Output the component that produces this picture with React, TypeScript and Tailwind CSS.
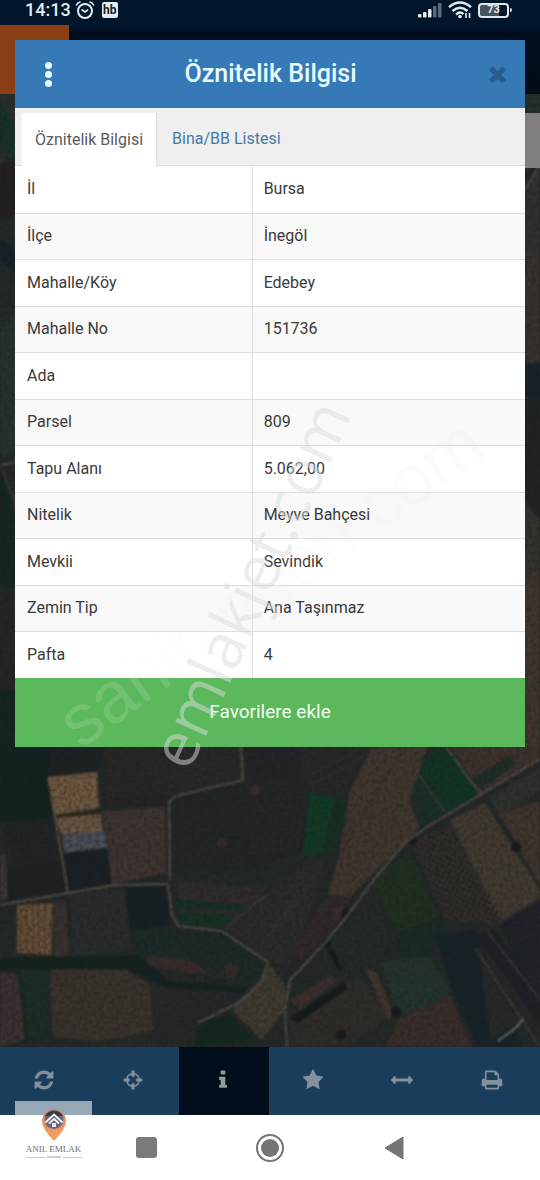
import { useState } from 'react';

const attributes = [
  { label: 'İl', value: 'Bursa' },
  { label: 'İlçe', value: 'İnegöl' },
  { label: 'Mahalle/Köy', value: 'Edebey' },
  { label: 'Mahalle No', value: '151736' },
  { label: 'Ada', value: '' },
  { label: 'Parsel', value: '809' },
  { label: 'Tapu Alanı', value: '5.062,00' },
  { label: 'Nitelik', value: 'Meyve Bahçesi' },
  { label: 'Mevkii', value: 'Sevindik' },
  { label: 'Zemin Tip', value: 'Ana Taşınmaz' },
  { label: 'Pafta', value: '4' },
];

const tools = [
  {
    name: 'Yenile',
    path: 'M1639 1056q0 5-1 7-64 268-268 434.5t-478 166.5q-146 0-282.5-55t-243.5-157l-129 129q-19 19-45 19t-45-19-19-45v-448q0-26 19-45t45-19h448q26 0 45 19t19 45-19 45l-137 137q71 66 161 102t187 36q134 0 250-65t186-179q11-17 53-117 8-23 30-23h192q13 0 22.5 9.5t9.5 22.5zm25-800v448q0 26-19 45t-45 19h-448q-26 0-45-19t-19-45 19-45l138-138q-148-137-349-137-134 0-250 65t-186 179q-11 17-53 117-8 23-30 23h-199q-13 0-22.5-9.5t-9.5-22.5v-7q65-268 270-434.5t480-166.5q146 0 284 55.5t245 156.5l130-129q19-19 45-19t45 19 19 45z',
  },
  {
    name: 'Konum',
    path: 'M1325 1024h-109q-26 0-45-19t-19-45v-128q0-26 19-45t45-19h109q-32-108-112.500-188.500t-188.500-112.500v109q0 26-19 45t-45 19h-128q-26 0-45-19t-19-45v-109q-108 32-188.500 112.500t-112.500 188.500h109q26 0 45 19t19 45v128q0 26-19 45t-45 19h-109q32 108 112.500 188.500t188.500 112.500v-109q0-26 19-45t45-19h128q26 0 45 19t19 45v109q108-32 188.500-112.500t112.500-188.500zm339-192v128q0 26-19 45t-45 19h-143q-37 161-154.500 278.500t-278.500 154.500v143q0 26-19 45t-45 19h-128q-26 0-45-19t-19-45v-143q-161-37-278.500-154.500t-154.500-278.500h-143q-26 0-45-19t-19-45v-128q0-26 19-45t45-19h143q37-161 154.500-278.500t278.500-154.500v-143q0-26 19-45t45-19h128q26 0 45 19t19 45v143q161 37 278.500 154.500t154.500 278.500h143q26 0 45 19t19 45z',
  },
  {
    name: 'Bilgi',
    path: 'M1216 1344v128q0 26-19 45t-45 19h-512q-26 0-45-19t-19-45v-128q0-26 19-45t45-19h64v-384h-64q-26 0-45-19t-19-45v-128q0-26 19-45t45-19h384q26 0 45 19t19 45v576h64q26 0 45 19t19 45zm-128-1152v192q0 26-19 45t-45 19h-256q-26 0-45-19t-19-45v-192q0-26 19-45t45-19h256q26 0 45 19t19 45z',
  },
  {
    name: 'Favoriler',
    path: 'M1728 647q0 22-26 48l-363 354 86 500q1 7 1 20 0 21-10.5 35.5t-30.5 14.5q-19 0-40-12l-449-236-449 236q-22 12-40 12-21 0-31.5-14.5t-10.5-35.5q0-6 2-20l86-500-364-354q-25-27-25-48 0-37 56-46l502-73 225-455q19-41 49-41t49 41l225 455 502 73q56 9 56 46z',
  },
  {
    name: 'Ölçüm',
    path: 'M1792 896q0 26-19 45l-256 256q-19 19-45 19t-45-19-19-45v-128h-1024v128q0 26-19 45t-45 19-45-19l-256-256q-19-19-19-45t19-45l256-256q19-19 45-19t45 19 19 45v128h1024v-128q0-26 19-45t45-19 45 19l256 256q19 19 19 45z',
  },
  {
    name: 'Yazdır',
    path: 'M448 1536h896v-256h-896v256zm0-640h896v-384h-160q-40 0-68-28t-28-68v-160h-640v640zm1280 64v416q0 13-9.5 22.5t-22.5 9.5h-224v160q0 40-28 68t-68 28h-960q-40 0-68-28t-28-68v-160h-224q-13 0-22.500-9.500t-9.500-22.500v-416q0-79 56.500-135.500t135.500-56.500h64v-544q0-40 28-68t68-28h672q40 0 88 20t76 48l152 152q28 28 48 76t20 88v256h64q79 0 135.500 56.500t56.500 135.500z',
  },
];

// Parcels of the aerial view: [points, fill]
const parcels: [string, string][] = [
  ['0,94 15,94 15,150 0,165', '#2c302d'],
  ['0,104 16,128 16,158 0,150', '#17332a'],
  ['0,165 16,160 16,215 0,220', '#251f22'],
  ['0,240 16,250 16,270 0,262', '#182126'],
  ['0,330 16,310 16,450 0,462', '#26332a'],
  ['0,468 16,520 16,590 0,585', '#16271f'],
  ['0,590 16,590 16,690 0,690', '#24262a'],
  ['0,690 50,690 50,820 0,822', '#14241f'],
  ['524,94 540,94 540,170 524,170', '#26302c'],
  ['524,195 540,165 540,250 524,250', '#352f2f'],
  ['524,250 540,250 540,370 524,360', '#38322e'],
  ['524,365 540,362 540,400 524,395', '#17232a'],
  ['524,400 540,400 540,520 524,500', '#202326'],
  ['524,500 540,520 540,570 524,575', '#34322c'],
  ['524,575 540,570 540,750 524,750', '#40352f'],
  ['0,745 50,745 45,778 54,816 0,822', '#13231f'],
  ['50,745 105,745 100,770 48,778', '#1e2223'],
  ['105,745 168,745 167,805 103,808', '#262523'],
  ['168,745 242,745 242,780 170,795', '#262826'],
  ['48,777 97,772 99,808 55,815', '#6e563f'],
  ['56,818 101,814 103,832 61,835', '#695440'],
  ['62,836 104,831 108,848 64,853', '#4a4d55'],
  ['64,853 109,848 110,884 68,890', '#1a2024'],
  ['102,811 165,807 167,873 112,884', '#3e3430'],
  ['4,823 54,818 66,892 8,900', '#1f2223'],
  ['0,855 6,855 8,898 0,900', '#393538'],
  ['17,905 53,903 52,955 17,953', '#6a5038'],
  ['54,903 66,900 69,955 54,958', '#39332f'],
  ['70,895 126,888 130,950 72,955', '#282b2c'],
  ['125,888 165,886 172,925 130,932', '#192023'],
  ['0,958 135,955 175,985 240,995 0,1047', '#1a2724'],
  ['140,975 175,985 240,990 225,1015 198,1023 195,1047 155,1047', '#252827'],
  ['0,972 18,974 25,1040 0,1047', '#3b3130'],
  ['20,970 50,970 50,1038 28,1038', '#1d2c26'],
  ['50,970 100,965 128,970 150,985 153,1030 100,1042 52,1036', '#3a332d'],
  ['172,798 243,783 270,778 270,870 175,872', '#212624'],
  ['175,880 265,888 262,897 225,928 180,922', '#302c2b'],
  ['175,899 245,905 240,911 176,908', '#193024'],
  ['177,911 235,915 225,928 180,925', '#1a3023'],
  ['135,930 222,933 262,968 245,985 180,972 135,962', '#1d2a26'],
  ['145,952 185,960 240,965 240,985 200,975 150,962', '#33292650'],
  ['268,893 310,860 325,860 315,900 290,965 268,962 228,930', '#2a2b2a'],
  ['232,1010 262,980 270,965 286,985 285,1010 262,1040', '#3f3a30'],
  ['198,1023 230,1014 255,1040 195,1047', '#152720'],
  ['245,745 300,745 306,850 255,865', '#222425'],
  ['300,745 372,745 350,790 310,790', '#272727'],
  ['372,748 428,745 410,800 420,828 375,872 350,897 328,895 340,850 350,790', '#40362f'],
  ['310,793 335,798 322,855 303,855', '#123a26'],
  ['337,800 347,802 335,850 323,857', '#18301f'],
  ['325,898 352,896 325,938 300,960 290,950', '#30292a'],
  ['412,788 422,772 446,813 425,825', '#1b3025'],
  ['420,768 435,750 448,750 480,794 446,813', '#133423'],
  ['450,745 540,745 540,760 480,793', '#3e322e'],
  ['470,780 510,755 516,765 480,790', '#202e26'],
  ['488,798 540,768 540,790 500,820', '#30312c'],
  ['370,882 410,850 432,905 440,925 400,935', '#232f22'],
  ['412,842 450,825 508,925 445,920', '#372f2b'],
  ['450,820 485,803 540,890 540,898 500,922', '#413a31'],
  ['500,815 540,800 540,885', '#40342f'],
  ['500,925 540,902 540,1010', '#1d2127'],
  ['328,942 365,903 398,940 378,960 345,972', '#232a27'],
  ['398,932 440,918 448,935 425,957 400,958', '#1a2a27'],
  ['380,962 430,956 450,990 447,998 405,1015 392,1000', '#25332d'],
  ['435,935 475,930 522,1047 478,1047 450,985', '#182327'],
  ['475,935 495,930 540,990 540,1025', '#1f2126'],
  ['478,945 520,1020 490,1040', '#272829'],
  ['290,1000 330,975 338,980 300,1010', '#3c2f2d'],
  ['290,1022 360,975 390,1015 350,1045 290,1045', '#302d28'],
  ['365,968 376,972 393,1012 388,1020', '#43352f'],
  ['400,1018 450,995 472,1047 385,1047', '#382e2a'],
];

// Country roads between the parcels: [points, width]
const roads: [string, number][] = [
  ['0,905 68,893 115,885 168,884 172,915 178,926 222,931 268,962 262,980 240,1002 198,1023', 2],
  ['48,778 68,893', 2],
  ['170,880 169,802 176,796 243,780 241,745', 2],
  ['540,759 480,795 430,825 405,843 375,878 350,912 325,943 290,980 285,1010 287,1047', 2],
  ['417,772 446,813', 1],
  ['447,748 480,794', 2],
  ['475,948 540,1047', 1],
  ['488,932 540,1000', 1],
  ['268,893 225,930', 1],
  ['0,465 16,462', 2],
  ['2,470 16,505', 1],
  ['525,190 540,165', 2],
];

function AerialMap() {
  return (
    <svg className="absolute inset-0 h-full w-full" viewBox="0 0 540 1180" preserveAspectRatio="none" aria-hidden="true">
      <defs>
        <linearGradient id="topbar" x1="0" y1="0" x2="0" y2="1">
          <stop offset="0" stopColor="#02172b" />
          <stop offset="0.3" stopColor="#00152a" />
          <stop offset="0.36" stopColor="#010d1c" />
          <stop offset="1" stopColor="#020c18" />
        </linearGradient>
        <pattern id="trees" width="5" height="5" patternUnits="userSpaceOnUse" patternTransform="rotate(28)">
          <circle cx="2" cy="2" r="1.6" fill="#1d2220" />
        </pattern>
        <pattern id="rows" width="4" height="5" patternUnits="userSpaceOnUse" patternTransform="rotate(-4)">
          <path d="M1 0v3.500" stroke="#4a4640" strokeWidth="1" />
        </pattern>
        <pattern id="furrows" width="6" height="6" patternUnits="userSpaceOnUse">
          <path d="M3 0v6" stroke="#3d3026" strokeWidth="1" />
        </pattern>
        <filter id="grain" x="0" y="0" width="100%" height="100%" colorInterpolationFilters="sRGB">
          <feTurbulence type="fractalNoise" baseFrequency="0.25" numOctaves="2" seed="4" />
          <feColorMatrix values="0 0 0 0 0.08  0 0 0 0 0.1  0 0 0 0 0.1  1.800 0 0 0 -0.600" />
        </filter>
        <filter id="soft" colorInterpolationFilters="sRGB">
          <feGaussianBlur stdDeviation="0.8" />
        </filter>
      </defs>
      <rect width="540" height="1180" fill="#242928" />
      <g filter="url(#soft)">
        {parcels.map(([points, fill]) => (
          <polygon key={points} points={points} fill={fill} />
        ))}
        <polygon points="17,905 53,903 52,955 17,953" fill="url(#furrows)" />
        <polygon points="412,842 450,825 508,925 445,920" fill="url(#trees)" />
        <g fill="url(#rows)" opacity="0.4">
          <polygon points="4,823 54,818 60,862 6,870" />
          <polygon points="105,745 240,745 240,778 170,792 106,800" />
          <polygon points="248,785 303,775 300,850 250,855" />
          <polygon points="70,895 126,888 130,950 72,955" />
          <polygon points="502,928 540,904 540,1005" />
          <polygon points="118,1030 155,1025 155,1047 118,1047" />
        </g>
        <g fill="none" stroke="#4b423c" strokeWidth="1">
          <path d="M312 785l58-32M310 775l50-26" opacity="0.6" />
          <path d="M404 750q-30 40-66 110" stroke="#2c2826" />
          <path d="M262 945l55-75M256 950l42-52M270 940l42-56" opacity="0.5" />
          <path d="M57 816l44-4" stroke="#2e2818" strokeWidth="3" />
        </g>
        <g fill="#151a1b">
          <circle cx="516" cy="847" r="5" />
          <circle cx="413" cy="841" r="4" />
          <circle cx="345" cy="914" r="5" />
          <circle cx="327" cy="943" r="4" />
          <circle cx="396" cy="1012" r="5" />
          <circle cx="341" cy="1035" r="5" />
          <path d="M326 945l10 22 6 4-8-20zM290 1018l55-36 2 7-50 34z" />
          <path d="M0 958l138-2 30 25 80 6-4 6-80-6-36-17-128-2z" fill="#15231f" />
        </g>
        <g fill="#543230">
          <circle cx="255" cy="790" r="5" opacity="0.5" />
          <circle cx="222" cy="843" r="5" opacity="0.4" />
          <circle cx="231" cy="970" r="7" opacity="0.4" />
          <path d="M145 955l45 5 20 14-20 0-40-8z" opacity="0.4" />
          <path d="M335 910l10-5-6 18-6-4z" opacity="0.5" />
        </g>
        <g fill="none" stroke="#564e47" strokeLinejoin="round">
          {roads.map(([points, width]) => (
            <polyline key={points} points={points} strokeWidth={width} />
          ))}
        </g>
        <path d="M498 1041l20-15 5-8" stroke="#777069" strokeWidth="2" fill="none" />
      </g>
      <rect y="94" width="540" height="960" filter="url(#grain)" opacity="0.4" />
      <rect width="540" height="94" fill="url(#topbar)" />
      <rect y="25" width="69" height="69" fill="#8a3f17" />
    </svg>
  );
}

function StatusBar() {
  return (
    <div className="relative flex h-6 items-center justify-between pr-[28px] pb-1 pl-[25px] text-[#e4ecf2]">
      <div className="flex items-center gap-[4px]">
        <span className="text-[18px] leading-6 font-medium">14:13</span>
        <svg className="h-[18px] w-[20px]" viewBox="0 0 20 18" fill="none" stroke="currentColor" strokeWidth="2" aria-hidden="true">
          <circle cx="10" cy="10" r="7" />
          <path d="M6.500 8.500L10 11l3.200-2.300M1 4.500Q2.500 1.500 5.500 0.800M19 4.500Q17.500 1.500 14.500 0.800" strokeWidth="1.6" />
        </svg>
        <span className="ml-[3px] flex h-4 w-4 items-center justify-center rounded-[2px] bg-[#e4ecf2] text-[12px] leading-4 font-bold text-[#14202c]">hb</span>
      </div>
      <div className="flex items-center gap-[6px]">
        <svg className="h-4 w-6" viewBox="0 0 24 16" fill="currentColor" aria-hidden="true">
          <rect x="0" y="12" width="3.500" height="3.500" rx="1" />
          <rect x="5" y="10" width="3.500" height="5.500" rx="1" />
          <rect x="10" y="7" width="3.500" height="8.500" rx="1" />
          <rect x="15" y="4" width="3.500" height="11.500" rx="1" opacity="0.4" />
          <rect x="20" y="1" width="3.500" height="14.500" rx="1" opacity="0.4" />
        </svg>
        <svg className="h-[18px] w-6" viewBox="0 0 24 18" fill="none" stroke="currentColor" strokeWidth="2.400" aria-hidden="true">
          <path d="M1 6.200Q12-3 23 6.200M4.500 10Q12 3.500 19.500 10M8 13.500Q12 10 15.500 13" />
          <circle cx="12" cy="15.500" r="1.800" fill="currentColor" stroke="none" />
          <path d="M18 12v5M21.500 12v5" strokeWidth="1.600" />
        </svg>
        <div className="flex items-center gap-[1px]">
          <span className="flex h-[15px] w-[31px] items-center justify-center rounded-[4px] border-2 border-[#dfe7ee] bg-[linear-gradient(90deg,#46525e_70%,transparent_70%)] text-[11px] leading-3 font-bold">73</span>
          <span className="h-1 w-[2px] rounded-r bg-[#dfe7ee]" />
        </div>
      </div>
    </div>
  );
}

function AttributeDialog() {
  const [tab, setTab] = useState('attributes');

  return (
    <section role="dialog" aria-labelledby="dialog-title" className="relative mx-[15px] mt-4 bg-white">
      <header className="flex h-[68px] items-center justify-between bg-[#3579b7] pr-[19px] pl-[23px]">
        <button type="button" aria-label="Menü" className="flex w-5 flex-col items-center gap-[2px]">
          <span className="h-[7px] w-[7px] rounded-full bg-[#e8fbff]" />
          <span className="h-[7px] w-[7px] rounded-full bg-[#e8fbff]" />
          <span className="h-[7px] w-[7px] rounded-full bg-[#e8fbff]" />
        </button>
        <h1 id="dialog-title" className="pr-[6px] text-[25px] leading-8 font-medium text-[#e8fbff]">Öznitelik Bilgisi</h1>
        <button type="button" aria-label="Kapat" className="text-[#285c8d]">
          <svg className="h-[17px] w-[17px]" viewBox="302 302 1188 1252" fill="currentColor" aria-hidden="true">
            <path d="M1490 1322q0 40-28 68l-136 136q-28 28-68 28t-68-28l-294-294-294 294q-28 28-68 28t-68-28l-136-136q-28-28-28-68t28-68l294-294-294-294q-28-28-28-68t28-68l136-136q28-28 68-28t68 28l294 294 294-294q28-28 68-28t68 28l136 136q28 28 28 68t-28 68l-294 294 294 294q28 28 28 68z" />
          </svg>
        </button>
      </header>

      {/* Tabs */}
      <div role="tablist" className="flex h-[58px] items-stretch border-b border-[#dddddd] bg-[#efefef] pt-[5px] pl-[7px] text-[16px]">
        <button
          type="button"
          role="tab"
          aria-selected={tab === 'attributes'}
          onClick={() => setTab('attributes')}
          className="-mb-px border-r border-[#dddddd] bg-white px-[13px] text-[#5a5a5a]"
        >
          Öznitelik Bilgisi
        </button>
        <button
          type="button"
          role="tab"
          aria-selected={tab === 'buildings'}
          onClick={() => setTab('buildings')}
          className="px-[15px] text-[#447ba6]"
        >
          Bina/BB Listesi
        </button>
      </div>

      <table className="w-full table-fixed border-collapse text-left text-[16px] text-[#3a3a3a]">
        <tbody>
          {attributes.map((row) => (
            <tr key={row.label} className="border-b border-[#dddddd] last:border-b-0 odd:h-[47px] even:h-[46px] even:bg-[#f9f9f9]">
              <th scope="row" className="w-[46.5%] border-r border-[#dddddd] px-3 font-normal">{row.label}</th>
              <td className="px-[11px]">{row.value}</td>
            </tr>
          ))}
        </tbody>
      </table>

      <button type="button" className="flex h-[69px] w-full items-center justify-center bg-[#5cb85c] text-[19px] text-[#f2fff0]">
        Favorilere ekle
      </button>
    </section>
  );
}

function Watermark() {
  return (
    <svg className="pointer-events-none absolute inset-0 h-full w-full" viewBox="0 0 540 1180" preserveAspectRatio="none" aria-hidden="true">
      <defs>
        <linearGradient id="fade" x1="0" y1="0" x2="1" y2="0">
          <stop offset="0" stopColor="#f0f8f0" stopOpacity="0.15" />
          <stop offset="0.25" stopColor="#f0f4f0" stopOpacity="0.14" />
          <stop offset="0.7" stopColor="#e4e4e4" stopOpacity="0.08" />
          <stop offset="1" stopColor="#d8d8d8" stopOpacity="0.12" />
        </linearGradient>
      </defs>
      <text transform="translate(81 750) rotate(-36)" fontFamily="Liberation Sans, sans-serif" fontSize="72" fill="url(#fade)">
        sahibinden.com
      </text>
      <text transform="translate(189 773) rotate(-65.500)" fontFamily="Open Sans, sans-serif" fontSize="63" fill="#dadcdc" fillOpacity="0.5">
        emlakjet.com
      </text>
    </svg>
  );
}

function AgencyLogo() {
  return (
    <div className="absolute bottom-[22px] left-[15px] flex w-[77px] flex-col items-center bg-white/55 pt-2">
      <svg className="h-8 w-[26px]" viewBox="0 0 26 32" aria-hidden="true">
        <defs>
          <linearGradient id="pin" x1="0" y1="0" x2="0" y2="1">
            <stop offset="0" stopColor="#d98a5c" />
            <stop offset="1" stopColor="#f6a066" />
          </linearGradient>
        </defs>
        <path d="M13 32Q1 20 1 12a12 12 0 0 1 24 0q0 8-12 20z" fill="url(#pin)" />
        <circle cx="13" cy="10.500" r="9.500" fill="#66667c" />
        <path d="M4 7a10 9 0 0 1 18 0z" fill="#33404c" />
        <path d="M4.500 13.500L13 5.500l8.500 8M8 14.500l5-4.500 5 4.500" fill="none" stroke="#f4f4fa" strokeWidth="1.800" />
        <path d="M11 14h4v4h-4z" fill="#e6e6ee" />
      </svg>
      <span className="mt-[2px] font-['Liberation_Serif',serif] text-[9px] leading-3 whitespace-nowrap text-[#6b6b70]">ANIL EMLAK</span>
      <span className="mt-[1px] flex w-[56px] items-center gap-[2px]">
        <span className="h-px flex-1 bg-[#c9c9c9]" />
        <span className="h-[2px] w-[14px] bg-[#cfcfcf]" />
        <span className="h-px flex-1 bg-[#c9c9c9]" />
      </span>
    </div>
  );
}

export default function App() {
  return (
    <div className="relative flex min-h-screen flex-col overflow-hidden bg-[#242928] font-[Roboto,sans-serif]">
      <AerialMap />
      <StatusBar />
      <div className="absolute top-[113px] right-0 h-[55px] w-[15px] bg-[#7f7f7f]" />
      <AttributeDialog />
      <div className="flex-1" />

      {/* Map tools */}
      <nav className="relative grid h-[68px] grid-cols-6 bg-[#1b3d5c] pr-[2px]">
        {tools.map((tool) => (
          <button
            key={tool.name}
            type="button"
            aria-label={tool.name}
            className={`flex items-center justify-center pr-[2px] pb-[2px] ${tool.name === 'Bilgi' ? 'bg-[#020d1b] text-[#93989d]' : 'text-[#84919c]'}`}
          >
            <svg className="h-[22px] w-[22px]" viewBox="0 0 1792 1792" fill="currentColor" aria-hidden="true">
              <path d={tool.path} />
            </svg>
          </button>
        ))}
      </nav>

      {/* System navigation */}
      <nav className="relative flex h-[65px] items-center justify-center gap-[96px] bg-white">
        <button type="button" aria-label="Son uygulamalar" className="flex w-7 justify-center">
          <span className="h-[21px] w-[21px] rounded-[3px] bg-[#7a7a7a]" />
        </button>
        <button type="button" aria-label="Ana ekran" className="flex h-7 w-7 items-center justify-center rounded-full border-2 border-[#757575]">
          <span className="h-[18px] w-[18px] rounded-full bg-[#757575]" />
        </button>
        <button type="button" aria-label="Geri" className="flex w-7 justify-center">
          <svg className="h-6 w-5" viewBox="0 0 20 24" fill="#757575" stroke="#757575" strokeWidth="1" strokeLinejoin="round" aria-hidden="true">
            <path d="M1 12L19 1v22z" />
          </svg>
        </button>
      </nav>

      <AgencyLogo />
      <Watermark />
    </div>
  );
}
